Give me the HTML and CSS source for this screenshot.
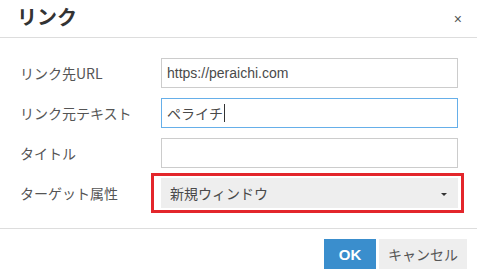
FILE: index.html
```html
<!DOCTYPE html>
<html lang="ja">
<head>
<meta charset="utf-8">
<title>リンク</title>
<link rel="stylesheet" href="styles.css">
</head>
<body>
<div class="modal">
  <div class="modal-header">
    <div class="modal-title">リンク</div>
    <div class="modal-close">×</div>
  </div>
  <div class="modal-body">
    <div class="form-row">
      <div class="form-label">リンク先URL</div>
      <div class="form-input">https://peraichi.com</div>
    </div>
    <div class="form-row">
      <div class="form-label">リンク元テキスト</div>
      <div class="form-input is-focus">ペライチ<span class="caret"></span></div>
    </div>
    <div class="form-row">
      <div class="form-label">タイトル</div>
      <div class="form-input"></div>
    </div>
    <div class="form-row">
      <div class="form-label">ターゲット属性</div>
      <div class="form-select">
        <span class="select-text">新規ウィンドウ</span>
        <span class="select-arrow"></span>
        <span class="highlight"></span>
      </div>
    </div>
  </div>
  <div class="modal-footer">
    <div class="btn btn-primary">OK</div>
    <div class="btn btn-default">キャンセル</div>
  </div>
</div>
</body>
</html>
```
FILE: styles.css
```css
html, body {
  margin: 0;
  padding: 0;
  background: #ffffff;
}
body {
  font-family: "Liberation Sans", "Noto Sans CJK JP", sans-serif;
  color: #444444;
}
.modal {
  width: 477px;
  height: 279px;
  overflow: hidden;
}
.modal-header {
  height: 38px;
  box-sizing: border-box;
  padding: 0 15px 3px 17px;
  display: flex;
  align-items: center;
  justify-content: space-between;
  border-bottom: 1px solid #dddddd;
}
.modal-title {
  font-family: "Noto Sans CJK JP", sans-serif;
  font-weight: bold;
  font-size: 20px;
  line-height: 1;
  color: #333333;
}
.modal-close {
  font-family: "Liberation Sans", sans-serif;
  font-size: 14px;
  line-height: 1;
  color: #555555;
  margin-top: 3px;
}
.modal-body {
  padding: 20px 19px 20px 20px;
  display: flex;
  flex-direction: column;
  gap: 10px;
}
.form-row {
  display: flex;
  align-items: center;
}
.form-label {
  width: 141px;
  font-family: "Noto Sans CJK JP", sans-serif;
  font-size: 14px;
  line-height: 1;
  color: #555555;
}
.form-input {
  width: 297px;
  height: 30px;
  box-sizing: border-box;
  border: 1px solid #cccccc;
  padding: 0 5px;
  display: flex;
  align-items: center;
  font-family: "Liberation Sans", "Noto Sans CJK JP", sans-serif;
  font-size: 14px;
  color: #4a4a4a;
  background: #ffffff;
}
.form-input.is-focus {
  border-color: #66afe9;
}
.caret {
  display: inline-block;
  width: 1px;
  height: 18px;
  background: #333333;
  margin-left: 1px;
}
.form-select {
  position: relative;
  width: 297px;
  height: 30px;
  box-sizing: border-box;
  background: #eeeeee;
  padding: 0 11px 0 9px;
  display: flex;
  align-items: center;
  justify-content: space-between;
}
.select-text {
  font-family: "Noto Sans CJK JP", sans-serif;
  font-size: 14px;
  line-height: 1;
  color: #4a4a4a;
}
.select-arrow {
  width: 0;
  height: 0;
  border-left: 3px solid transparent;
  border-right: 3px solid transparent;
  border-top: 3px solid #333333;
  margin-top: 2px;
}
.highlight {
  position: absolute;
  left: -10px;
  right: -6px;
  top: -5px;
  bottom: -5px;
  border: 3px solid #e3262b;
}
.modal-footer {
  border-top: 1px solid #dddddd;
  padding: 10px 10px 0 0;
  display: flex;
  justify-content: flex-end;
  gap: 3px;
}
.btn {
  height: 30px;
  display: flex;
  align-items: center;
  justify-content: center;
  font-size: 14px;
  line-height: 1;
}
.btn-primary {
  width: 52px;
  background: #3a8ecd;
  color: #ffffff;
  font-family: "Liberation Sans", sans-serif;
  font-weight: bold;
  font-size: 15px;
}
.btn-default {
  width: 88px;
  background: #eeeeee;
  color: #555555;
  font-family: "Noto Sans CJK JP", sans-serif;
}
```
